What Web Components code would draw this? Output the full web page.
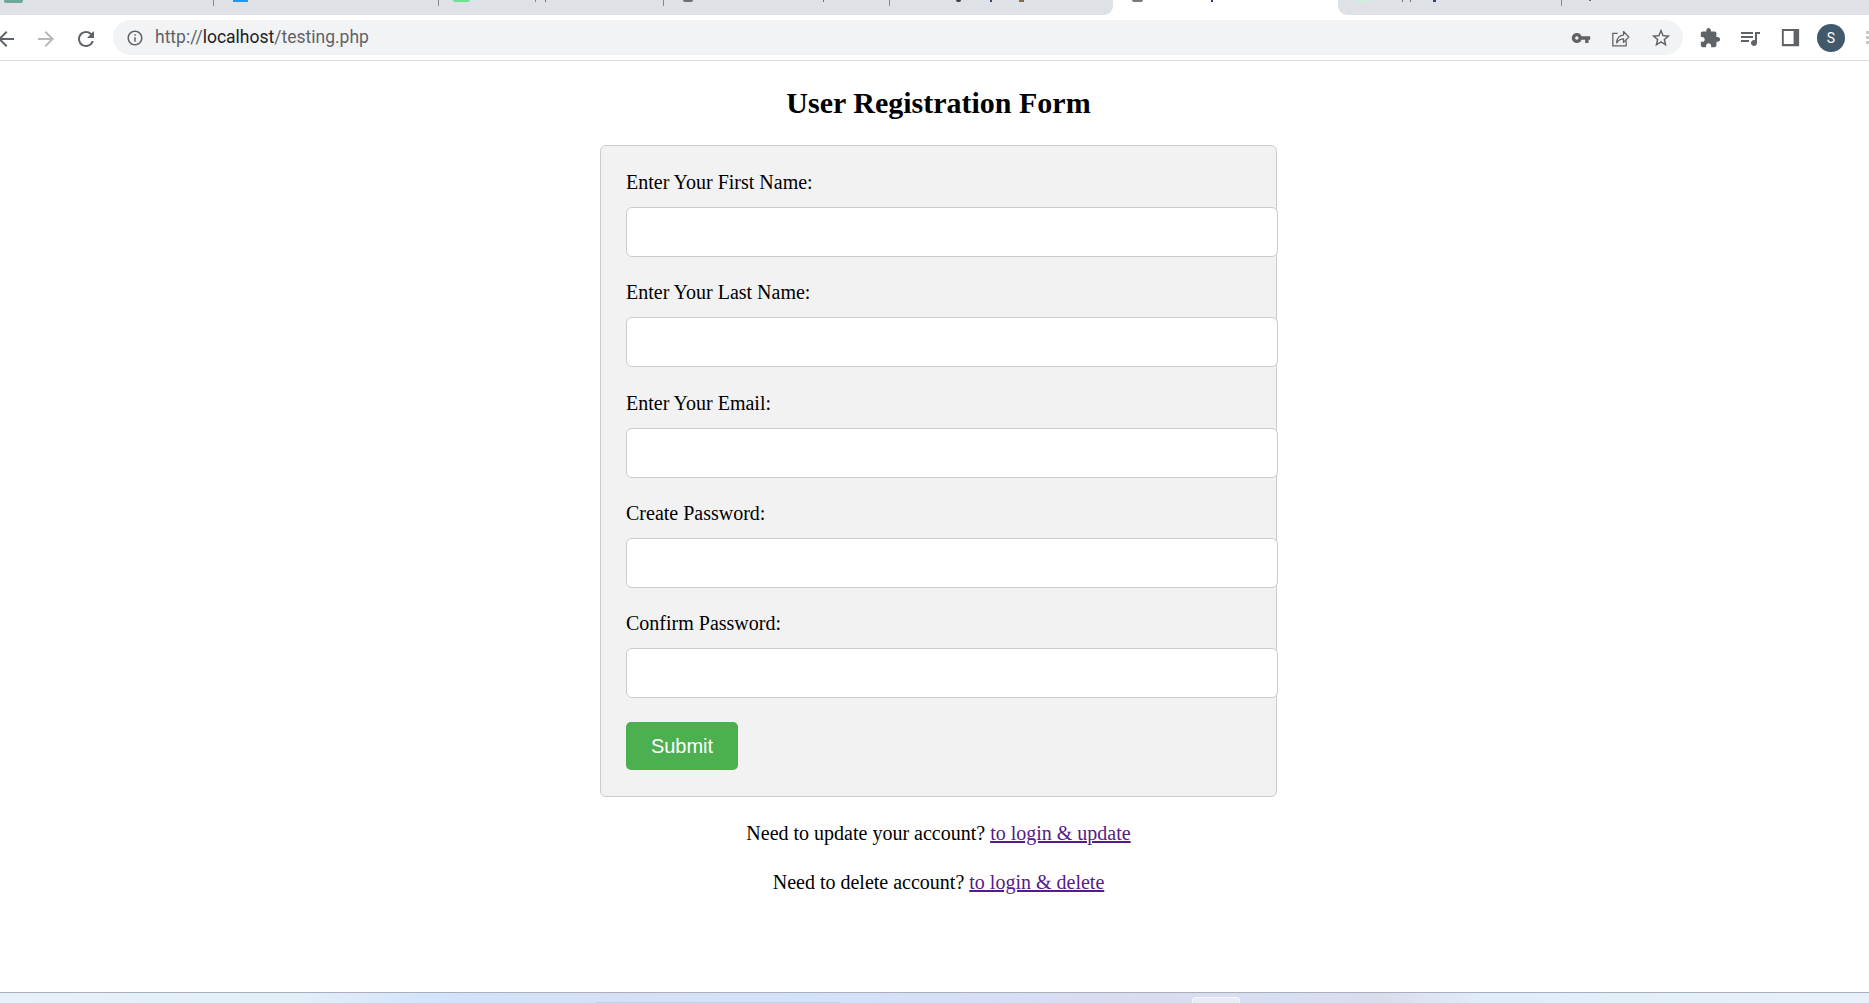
<!DOCTYPE html>
<html lang="en">
<head>
<meta charset="utf-8">
<title>User Registration Form</title>
<style>
html,body{margin:0;padding:0;height:100%;background:#fff;overflow:hidden}
</style>
</head>
<body>
<app-window>
  <browser-tabs slot="tabs"></browser-tabs>
  <browser-toolbar slot="toolbar"></browser-toolbar>
  <registration-page slot="page"></registration-page>
  <task-strip slot="taskbar"></task-strip>
</app-window>

<script>
function def(name, html, init){
  customElements.define(name, class extends HTMLElement{
    constructor(){
      super();
      const root=this.attachShadow({mode:'open'});
      root.innerHTML=html;
      if(init) init(this,root);
    }
  });
}

def('app-window',`<style>
:host{display:flex;flex-direction:column;height:100vh;overflow:hidden;font-family:"Liberation Serif",serif;color:#000}
.page{flex:1;min-height:0;display:block}
</style>
<slot name="tabs"></slot><slot name="toolbar"></slot>
<div class="page"><slot name="page"></slot></div>
<slot name="taskbar"></slot>`);

/* ---------- tab strip: only the cut-off lower edge of the tabs is visible ---------- */
def('browser-tabs',`<style>
:host{display:flex;height:15px;flex:none;background:#fff;overflow:hidden}
.group{display:flex;background:#dee1e6;height:15px;align-items:flex-start}
.left{width:1113px;border-bottom-right-radius:9px}
.active{width:225px;height:15px;display:flex;align-items:flex-start;background:#fff}
.right{flex:1;border-bottom-left-radius:9px}
.sep{flex:none;width:1px;height:6px;background:#85898f}
.m{flex:none;display:block}
</style>
<div class="group left">
  <i class="m" style="margin-left:4px;width:19px;height:3px;background:#6fa898;border-radius:0 0 2px 2px"></i>
  <i class="m sep" style="margin-left:190px"></i>
  <i class="m" style="margin-left:19px;width:15px;height:2px;background:#2196f3"></i>
  <i class="m sep" style="margin-left:190px"></i>
  <i class="m" style="margin-left:14px;width:17px;height:2px;background:#6fe08f;border-radius:0 0 8px 8px"></i>
  <i class="m" style="margin-left:65px;width:1px;height:2px;background:#b9794e"></i>
  <i class="m" style="margin-left:9px;width:1px;height:2px;background:#4a6fb5"></i>
  <i class="m sep" style="margin-left:117px"></i>
  <i class="m" style="margin-left:19px;width:10px;height:2px;background:#6a6d72;border-radius:0 0 5px 5px"></i>
  <i class="m" style="margin-left:130px;width:1px;height:2px;background:#4a6fb5"></i>
  <i class="m sep" style="margin-left:65px"></i>
  <i class="m" style="margin-left:66px;width:5px;height:2px;background:#3d4046;border-radius:0 0 3px 3px"></i>
  <i class="m" style="margin-left:29px;width:2px;height:2px;background:#3a4a6a"></i>
  <i class="m" style="margin-left:27px;width:5px;height:2px;background:#8a6a4a"></i>
</div>
<div class="active">
  <i class="m" style="margin-left:19px;width:11px;height:2px;background:#75787d;border-radius:0 0 6px 6px"></i>
  <i class="m" style="margin-left:68px;width:2px;height:2px;background:#2a3a5a"></i>
</div>
<div class="group right">
  <i class="m" style="margin-left:18px;width:14px;height:3px;background:#cfeede;border-radius:0 0 7px 7px"></i>
  <i class="m" style="margin-left:32px;width:1px;height:2px;background:#7a6a5a"></i>
  <i class="m" style="margin-left:7px;width:1px;height:2px;background:#7a6a5a"></i>
  <i class="m" style="margin-left:22px;width:3px;height:2px;background:#2b3f78"></i>
  <i class="m sep" style="margin-left:125px"></i>
  <i class="m" style="margin-left:27px;width:2px;height:1px;background:#6a6d72"></i>
</div>`);

/* ---------- toolbar ---------- */
const ICON={
 back:'<path d="M20 11H7.83l5.59-5.59L12 4l-8 8 8 8 1.41-1.41L7.83 13H20v-2z"/>',
 reload:'<path d="M17.65 6.35A7.958 7.958 0 0 0 12 4c-4.42 0-7.99 3.58-7.99 8s3.57 8 7.99 8c3.73 0 6.84-2.55 7.73-6h-2.08A5.99 5.99 0 0 1 12 18c-3.31 0-6-2.69-6-6s2.69-6 6-6c1.66 0 3.14.69 4.22 1.78L13 11h7V4l-2.35 2.35z"/>',
 info:'<path d="M11 7h2v2h-2zm0 4h2v6h-2zm1-9C6.48 2 2 6.48 2 12s4.48 10 10 10 10-4.48 10-10S17.52 2 12 2zm0 18c-4.41 0-8-3.59-8-8s3.59-8 8-8 8 3.59 8 8-3.59 8-8 8z"/>',
 key:'<path d="M12.65 10A6 6 0 0 0 7 6c-3.31 0-6 2.69-6 6s2.69 6 6 6a6 6 0 0 0 5.65-4H17v4h4v-4h2v-4H12.65zM7 14c-1.1 0-2-.9-2-2s.9-2 2-2 2 .9 2 2-.9 2-2 2z"/>',
 share:'<path fill="none" stroke="currentColor" stroke-width="1.5" d="M8 6.5H2.2v15h16V15"/><path fill="none" stroke="currentColor" stroke-width="1.5" stroke-linejoin="round" d="M6.8 18c0-6 3.6-9.6 8.2-9.6V4.2l6.4 6.6-6.4 6.4v-4.2c-3.6 0-6.4 1.6-8.2 5z"/>',
 star:'<path d="M22 9.24l-7.19-.62L12 2 9.19 8.63 2 9.24l5.46 4.73L5.82 21 12 17.27 18.18 21l-1.63-7.03L22 9.24zM12 15.4l-3.76 2.27 1-4.28-3.32-2.88 4.38-.38L12 6.1l1.71 4.04 4.38.38-3.32 2.88 1 4.28L12 15.4z"/>',
 puzzle:'<path d="M20.5 11H19V7c0-1.1-.9-2-2-2h-4V3.5C13 2.12 11.88 1 10.5 1S8 2.12 8 3.5V5H4c-1.1 0-1.99.9-1.99 2v3.8H3.5c1.49 0 2.7 1.21 2.7 2.7s-1.21 2.7-2.7 2.7H2V20c0 1.1.9 2 2 2h3.8v-1.5c0-1.49 1.21-2.7 2.7-2.7 1.49 0 2.7 1.21 2.7 2.7V22H17c1.1 0 2-.9 2-2v-4h1.5c1.38 0 2.5-1.12 2.5-2.5S21.88 11 20.5 11z"/>',
 media:'<path d="M15 6H3v2h12V6zm0 4H3v2h12v-2zM3 16h8v-2H3v2zM17 6v8.18c-.31-.11-.65-.18-1-.18-1.66 0-3 1.34-3 3s1.34 3 3 3 3-1.34 3-3V8h3V6h-5z"/>',
 side:'<path fill-rule="evenodd" d="M3 3h18v18H3zM5 5.2v13.6h10.2V5.2z"/>'
};
def('tool-icon',`<style>
:host{display:flex;flex:none;width:40px;height:40px;align-items:center;justify-content:center;color:#5f6368}
:host([soft]){color:#b5b8bc}
svg{display:block;fill:currentColor}
</style><svg viewBox="0 0 24 24"></svg>`,(el,root)=>{
  queueMicrotask(()=>{
    const s=root.querySelector('svg'),z=el.getAttribute('size')||24;
    s.setAttribute('width',z);s.setAttribute('height',z);
    s.innerHTML=ICON[el.getAttribute('name')]||'';
  });
});

def('browser-toolbar',`<style>
:host{display:flex;flex:none;height:45px;box-sizing:border-box;background:#fff;align-items:flex-start;overflow:hidden}
.row{display:flex;align-items:center;height:45px;width:100%;box-sizing:border-box}
.nav{display:flex;margin-left:-14px;flex:none;padding-top:2px}
.omni{flex:none;width:1570px;height:35px;border-radius:18px;background:#f1f3f4;display:flex;align-items:center;margin-left:7px;box-sizing:border-box;padding-left:13px;padding-right:2px}
.url{flex:1;margin-left:11px;font:17.5px/35px Roboto,"Liberation Sans",sans-serif;color:#5f6368;white-space:nowrap}
.url b{font-weight:400;color:#202124}
.tail{display:flex;flex:none;margin-left:7px;align-items:center}
.avatar{flex:none;width:28px;height:28px;margin:0 6px 0 7px;border-radius:50%;background:#41596a;color:#fff;font:14px/28px Roboto,"Liberation Sans",sans-serif;text-align:center}
.dots{flex:none;margin-left:15px;width:3px;height:14px;background:radial-gradient(circle at 50% 1.5px,#c4c6c9 1.4px,transparent 1.6px) 0 0/3px 5px}
</style>
<div class="row">
  <div class="nav">
    <tool-icon name="back"></tool-icon>
    <tool-icon name="back" soft style="transform:scaleX(-1)"></tool-icon>
    <tool-icon name="reload"></tool-icon>
  </div>
  <div class="omni">
    <tool-icon name="info" size="18" style="width:18px"></tool-icon>
    <span class="url">http://<b>localhost</b>/testing.php</span>
    <tool-icon name="key" size="20"></tool-icon>
    <tool-icon name="share" size="20"></tool-icon>
    <tool-icon name="star" size="22"></tool-icon>
  </div>
  <div class="tail">
    <tool-icon name="puzzle" size="22"></tool-icon>
    <tool-icon name="media" size="24"></tool-icon>
    <tool-icon name="side" size="23"></tool-icon>
    <span class="avatar">S</span>
    <span class="dots"></span>
  </div>
</div>`);

/* ---------- page ---------- */
def('form-field',`<style>
:host{display:block;margin-bottom:24.3px}
label{display:block;font:20px/22px "Liberation Serif",serif;margin-bottom:14px;color:#000}
input{display:block;box-sizing:border-box;width:652px;height:50px;background:#fff;border:1px solid #ccc;border-radius:6px;padding:0 12px;font:16px "Liberation Sans",sans-serif;outline:none;margin:0}
</style><label></label><input>`,(el,root)=>{
  queueMicrotask(()=>{
    root.querySelector('label').textContent=el.getAttribute('label');
    root.querySelector('input').type=el.getAttribute('type')||'text';
  });
});

def('registration-page',`<style>
:host{display:block;box-sizing:border-box;height:100%;border-top:1px solid #dadce0;background:#fff;padding-left:8px;overflow:hidden}
h2{margin:25px 0 26px;font:bold 30px/33px "Liberation Serif",serif;text-align:center;color:#000}
form{display:block;box-sizing:border-box;width:677px;height:652px;margin:0 auto;background:#f2f2f2;border:1px solid #ccc;border-radius:6px;padding:25px}
button{display:block;width:112px;height:48px;border:0;border-radius:5px;background:#4caf50;color:#fff;font:20px "Liberation Sans",sans-serif;padding:0;margin:2px 0 0}
p{margin:26.5px 0;font:20px/22px "Liberation Serif",serif;text-align:center;color:#000}
form + p{margin-top:25px}
a{color:#551a8b}
</style>
<h2>User Registration Form</h2>
<form>
  <form-field label="Enter Your First Name:"></form-field>
  <form-field label="Enter Your Last Name:"></form-field>
  <form-field label="Enter Your Email:" type="email"></form-field>
  <form-field label="Create Password:" type="password"></form-field>
  <form-field label="Confirm Password:" type="password"></form-field>
  <button type="button">Submit</button>
</form>
<p>Need to update your account? <a href="#">to login &amp; update</a></p>
<p>Need to delete account? <a href="#">to login &amp; delete</a></p>`);

/* ---------- desktop taskbar edge ---------- */
def('task-strip',`<style>
:host{display:flex;flex:none;height:11px;box-sizing:border-box;border-top:1px solid #a9b0ba;align-items:flex-end;overflow:hidden;
background:linear-gradient(90deg,#e6f1f9 0,#e2eef8 300px,#d3e3fb 430px,#d4e0f7 620px,#d3e2fb 800px,#d6def6 1000px,#dadcef 1130px,#d8dff2 1290px,#dadced 1380px,#e0ecf8 1480px,#e6f1fa 1869px)}
.bar{flex:none;margin-left:596px;width:244px;height:1px;background:#c3cfe6}
.pin{flex:none;margin-left:352px;width:48px;height:6px;background:#e9ecf7;border:1px solid #f4f6fc;border-bottom:0;border-radius:4px 4px 0 0;box-sizing:border-box}
</style><i class="bar"></i><i class="pin"></i>`);
</script>
</body>
</html>
